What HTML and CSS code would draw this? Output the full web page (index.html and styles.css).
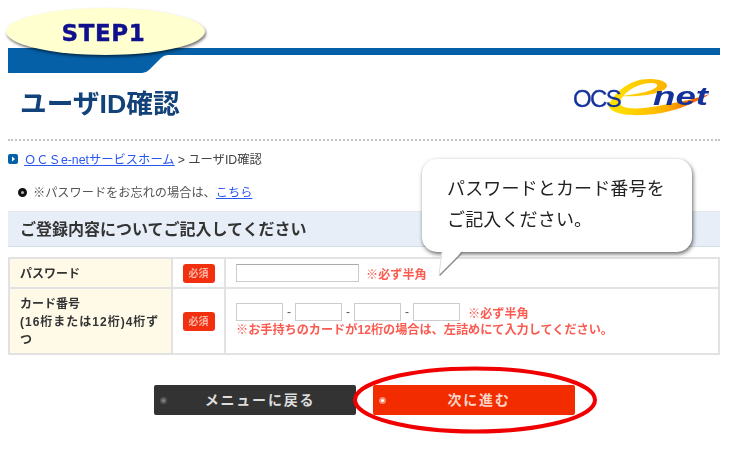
FILE: index.html
```html
<!DOCTYPE html>
<html lang="ja">
<head>
<meta charset="utf-8">
<title>ユーザID確認</title>
<link rel="stylesheet" href="styles.css">
</head>
<body>
<div class="page">
  <svg class="band" width="712" height="25" viewBox="0 0 712 25" aria-hidden="true"><path d="M0 0H712V7H160Q156 7 153 10L141 22Q138 25 134 25H0Z" fill="#0560a8"/></svg>
  <header class="head">
    <h1>ユーザID確認</h1>
    <svg class="logo" width="140" height="42" viewBox="0 0 140 42">
      <defs><linearGradient id="sw" x1="0" y1="0" x2="1" y2="0"><stop offset="0" stop-color="#ffe600"/><stop offset=".55" stop-color="#ffb400"/><stop offset="1" stop-color="#f04010"/></linearGradient></defs>
      <path d="M38 28C46 14 60 3 78 3C92 3 100 8 94 13C86 19 66 21 50 20C66 18 84 15 86 10C88 6 74 6 64 11C54 16 47 24 50 29C54 34 72 33 92 29C110 26 126 22 139 18C122 28 100 38 72 39C52 40 36 36 38 28Z" fill="url(#sw)"/>
      <text x="2" y="31" class="logo-ocs">OCS</text>
      <text x="82" y="29" class="logo-net" textLength="55" lengthAdjust="spacingAndGlyphs">net</text>
    </svg>
  </header>
  <nav class="crumb">
    <svg class="crumb-icon" width="10" height="10" viewBox="0 0 10 10"><rect width="10" height="10" rx="2" fill="#0560a8"/><path d="M4 2.5 7 5 4 7.5Z" fill="#fff"/></svg>
    <a href="#">ＯＣＳe-netサービスホーム</a><span class="crumb-sep">&gt; ユーザID確認</span>
  </nav>
  <p class="note"><span class="dot"></span>※パスワードをお忘れの場合は、<a href="#">こちら</a></p>
  <h2>ご登録内容についてご記入してください</h2>
  <table>
    <tr class="row-a">
      <th>パスワード</th>
      <td class="req"><span class="badge">必須</span></td>
      <td class="val"><span class="line"><input class="pw" type="text"><span class="warn warn-a">※必ず半角</span></span></td>
    </tr>
    <tr class="row-b">
      <th>カード番号<br><span class="th-wide">(16桁または12桁)4桁ず<br>つ</span></th>
      <td class="req"><span class="badge">必須</span></td>
      <td class="val">
        <span class="line"><input class="card" type="text"><i>-</i><input class="card" type="text"><i>-</i><input class="card" type="text"><i>-</i><input class="card" type="text"><span class="warn warn-b">※必ず半角</span></span>
        <span class="warn warn-c">※お手持ちのカードが12桁の場合は、左詰めにて入力してください。</span>
      </td>
    </tr>
  </table>
  <div class="actions">
    <a class="btn btn-back" href="#"><span class="btn-dot"></span>メニューに戻る</a>
    <a class="btn btn-next" href="#"><span class="btn-dot"></span>次に進む</a>
  </div>
</div>
<div class="step"><span>STEP1</span></div>
<div class="bubble">パスワードとカード番号を<br>ご記入ください。</div>
<svg class="tail" width="30" height="28" viewBox="0 0 30 28" aria-hidden="true"><path d="M6 0 3 24 26 0Z" fill="#fff"/><path d="M3.500 24.500 27 1" fill="none" stroke="#8a8a8a" stroke-width="1.4"/><path d="M6 1 3 24" fill="none" stroke="#ddd" stroke-width="1"/></svg>
<svg class="ring" width="246" height="70" viewBox="0 0 246 70" aria-hidden="true"><ellipse cx="123" cy="35" rx="120" ry="31.5" fill="none" stroke="#f00000" stroke-width="4"/></svg>
</body>
</html>
```
FILE: styles.css
```css
* { box-sizing: border-box; }
html, body { margin: 0; padding: 0; background: #fff; }
body { position: relative; width: 730px; height: 450px; overflow: hidden; font-family: "Liberation Sans", "Noto Sans CJK JP", sans-serif; color: #333; }
.page { width: 712px; margin-left: 8px; padding-top: 48px; filter: blur(.35px); }
.band { display: block; }
.head { height: 68px; display: flex; align-items: center; justify-content: space-between; border-bottom: 2px dotted #c4c4c4; padding: 0 9px 0 12px; }
h1 { margin: 0 0 4px; font-size: 26.7px; line-height: 30px; font-weight: 700; color: #12427a; }
.logo { margin: 0 0 18px; }
.logo-ocs { font: 400 24px "Liberation Sans", sans-serif; fill: #14329a; stroke: #14329a; stroke-width: .3px; letter-spacing: -1.6px; }
.logo-net { font: italic 700 25px "Liberation Sans", sans-serif; fill: #14329a; }
.crumb { display: flex; align-items: center; height: 20px; margin-top: 8px; font-size: 12.3px; color: #444; }
.crumb-icon { margin-right: 6px; }
.crumb a, .note a { color: #2a56f0; }
.crumb-sep { margin-left: 3px; }
.note { display: flex; align-items: center; height: 20px; margin: 13px 0 0; padding-left: 10px; font-size: 12.2px; color: #555; }
.dot { width: 9px; height: 9px; border-radius: 50%; background: #bbb; border: 3.5px solid #111; margin-right: 6px; }
h2 { margin: 9px 0 0; height: 36px; padding-left: 12px; background: #e7eef7; border-bottom: 1px solid #d5dde6; border-top: 1px solid #e4e8ee; font-size: 16px; line-height: 36px; font-weight: 700; color: #333; }
table { width: 712px; margin-top: 10px; border-collapse: collapse; table-layout: fixed; font-size: 12px; }
th, td { border: 2px solid #e2e2e2; padding: 0; }
th { width: 163px; padding: 1px 4px 0 10px; background: #fffae8; text-align: left; font-size: 12px; line-height: 18px; font-weight: 700; color: #333; }
.th-wide { letter-spacing: 1px; }
.req { width: 53px; text-align: center; }
.row-a { height: 30px; }
.row-b { height: 66px; }
.badge { display: inline-block; width: 32px; height: 19px; vertical-align: middle; border-radius: 3px; background: #f2300f; color: #f8b8a8; font-size: 10px; line-height: 19px; font-weight: 700; }
.val { padding-left: 10px; }
.line { display: flex; align-items: center; }
input { padding: 0; margin: 0; border: 1px solid #ccc; background: #fff; height: 18px; }
.pw { width: 123px; border-top-color: #aaa; }
.card { width: 47px; }
i { width: 12px; text-align: center; font-style: normal; color: #555; }
.warn { color: #fa5a50; font-weight: 700; font-size: 12.15px; }
.warn-a { margin-left: 7px; }
.warn-b { margin-left: 8px; }
.warn-c { display: block; margin-top: 0; line-height: 18px; }
.actions { display: flex; gap: 17px; margin: 30px 0 0 146px; }
.btn { position: relative; display: block; width: 202px; height: 30px; padding-left: 10px; border-radius: 2px; text-align: center; text-decoration: none; font-size: 14px; line-height: 30px; font-weight: 700; letter-spacing: 1.8px; }
.btn-back { background: #333; color: #ddd; }
.btn-next { background: #f32c00; color: #fbd5c5; }
.btn-dot { position: absolute; left: 6px; top: 12px; width: 7px; height: 7px; border-radius: 50%; background: #888; border: 2px solid #555; }
.btn-next .btn-dot { background: #fff; border-color: #f78a70; }
.step { position: absolute; left: 6px; top: 8px; width: 199px; height: 47px; border-radius: 50%; background: #ffffcf; box-shadow: 1px 2px 3px rgba(0,0,0,.55); display: flex; align-items: center; justify-content: center; }
.step span { margin: 2px 4px 0 0; font: 700 23px/24px "DejaVu Sans", sans-serif; letter-spacing: .6px; color: #10108e; -webkit-text-stroke: .4px #10108e; }
.bubble { position: absolute; left: 422px; top: 159px; width: 270px; height: 93px; padding: 15px 0 0 25px; border-radius: 15px; background: #fff; box-shadow: 1px 2px 4px rgba(0,0,0,.6); font-size: 18px; letter-spacing: .15px; line-height: 31px; color: #222; }
.tail { position: absolute; left: 436px; top: 251px; }
.ring { position: absolute; left: 352px; top: 365px; }
```
